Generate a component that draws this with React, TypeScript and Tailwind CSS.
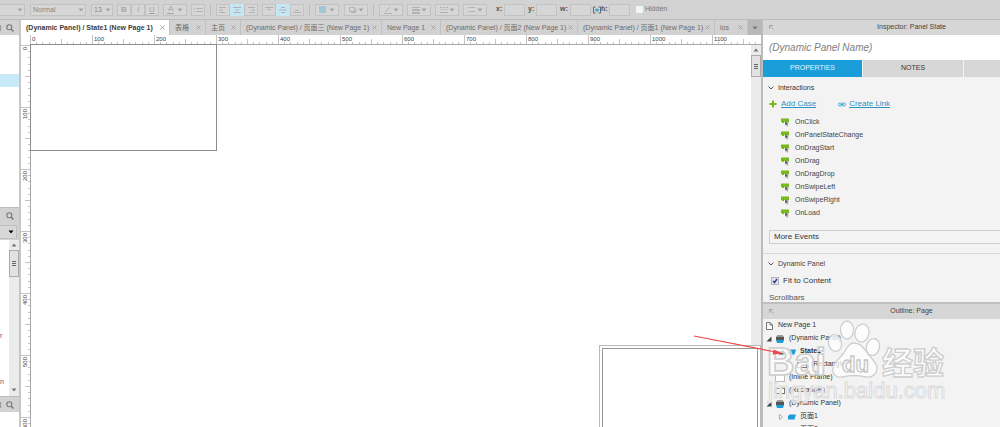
import * as React from 'react';
import clsx from 'clsx';

const SCALE = 0.62;

const tabs = [
  { label: '(Dynamic Panel) / State1 (New Page 1)', width: 'w-[149px]', active: true },
  { label: '表格', width: 'w-[36px]' },
  { label: '主页', width: 'w-[35px]' },
  { label: '(Dynamic Panel) / 页面三 (New Page 1)', width: 'w-[141px]' },
  { label: 'New Page 1', width: 'w-[59px]' },
  { label: '(Dynamic Panel) / 页面2 (New Page 1)', width: 'w-[137px]' },
  { label: '(Dynamic Panel) / 页面1 (New Page 1)', width: 'w-[137px]' },
  { label: 'ios', width: 'w-[33px]' },
];

const events = [
  'OnClick',
  'OnPanelStateChange',
  'OnDragStart',
  'OnDrag',
  'OnDragDrop',
  'OnSwipeLeft',
  'OnSwipeRight',
  'OnLoad',
];

type NodeIcon = 'page' | 'panel' | 'state' | 'rect' | 'frame';

interface TreeNode {
  label: string;
  icon: NodeIcon;
  indent: string;
  toggle?: 'open' | 'closed';
  bold?: boolean;
}

const outline: TreeNode[] = [
  { label: 'New Page 1', icon: 'page', indent: 'pl-[3px]' },
  { label: '(Dynamic Panel)', icon: 'panel', indent: 'pl-[3px]', toggle: 'open' },
  { label: 'State1', icon: 'state', indent: 'pl-[15px]', toggle: 'open', bold: true },
  { label: '(Rectangle)', icon: 'rect', indent: 'pl-[34px]' },
  { label: '(Inline Frame)', icon: 'frame', indent: 'pl-[12px]' },
  { label: '(Rectangle)', icon: 'rect', indent: 'pl-[12px]' },
  { label: '(Dynamic Panel)', icon: 'panel', indent: 'pl-[3px]', toggle: 'open' },
  { label: '页面1', icon: 'state', indent: 'pl-[15px]', toggle: 'closed' },
  { label: '页面2', icon: 'state', indent: 'pl-[15px]', toggle: 'closed' },
];

function Caret({ className = 'text-[#a2a2a2]' }: { className?: string }) {
  return (
    <svg viewBox="0 0 6 4" className={clsx('h-[4px] w-[6px] shrink-0', className)}>
      <path d="M0.5 0.5h5L3 3.5z" fill="currentColor" />
    </svg>
  );
}

function SearchIcon() {
  return (
    <svg viewBox="0 0 8 8" className="h-[8px] w-[8px]" fill="none" stroke="#777">
      <circle cx="3.3" cy="3.3" r="2.5" strokeWidth="1.1" />
      <path d="M5.2 5.2L7.5 7.5" strokeWidth="1.5" />
    </svg>
  );
}

function ToolButton({
  label,
  active,
  className = 'w-[14px]',
  menu,
  children,
}: {
  label: string;
  active?: boolean;
  className?: string;
  menu?: boolean;
  children: React.ReactNode;
}) {
  return (
    <button
      aria-label={label}
      className={clsx(
        'flex h-[12px] shrink-0 items-center border text-[8px] leading-none text-[#a6a6a6]',
        menu ? 'justify-between px-[3px]' : 'justify-center',
        active ? 'border-[#c5e6f4] bg-[#c5e6f4]' : 'border-[#c2c2c2] bg-[#d6d6d6]',
        className,
      )}
    >
      {children}
      {menu && <Caret />}
    </button>
  );
}

function Glyph({ d }: { d: string }) {
  return (
    <svg viewBox="0 0 10 8" className="h-[8px] w-[10px]" fill="none" stroke="#b2b2b2">
      <path d={d} />
    </svg>
  );
}

function ToolSelect({ label, value, className }: { label: string; value: string; className: string }) {
  return (
    <div className={clsx('grid h-[12px] shrink-0 items-center border border-[#c2c2c2] bg-[#d6d6d6]', className)}>
      <select
        aria-label={label}
        defaultValue={value}
        className="h-[10px] w-full appearance-none bg-transparent pl-[2px] text-[7px] leading-[10px] text-[#888] [grid-area:1/1]"
      >
        <option>{value}</option>
      </select>
      <div className="pointer-events-none justify-self-end pr-px [grid-area:1/1]">
        <Caret />
      </div>
    </div>
  );
}

function NumberField({ label, className = '' }: { label: string; className?: string }) {
  return (
    <label className={clsx('flex shrink-0 items-center justify-between text-[7px] font-bold text-[#555]', className)}>
      {label}:
      <input className="h-[12px] w-[21px] border border-[#c2c2c2] bg-[#d6d6d6]" />
    </label>
  );
}

function Separator() {
  return <div className="mx-[5px] h-[12px] w-px shrink-0 bg-[#bdbdbd]" />;
}

function Toolbar() {
  return (
    <div className="flex h-[20px] shrink-0 items-center overflow-hidden border-b border-[#bdbdbd] bg-[#d2d2d2]">
      <ToolSelect label="Shape style" value="" className="w-[25px] border-l-0" />
      <ToolSelect label="Font style" value="Normal" className="ml-[5px] w-[56px]" />
      <ToolSelect label="Font size" value="13" className="ml-[5px] mr-[4px] w-[22px]" />
      <ToolButton label="Bold">
        <b>B</b>
      </ToolButton>
      <ToolButton label="Italic">
        <i>I</i>
      </ToolButton>
      <ToolButton label="Underline">
        <u>U</u>
      </ToolButton>
      <ToolButton label="Text colour" menu className="ml-[4px] w-[24px]">
        <span className="border-b border-current px-px">A</span>
      </ToolButton>
      <ToolButton label="Bullets" className="ml-[4px] w-[14px]">
        <Glyph d="M1 2.5h1M3.5 2.5h6M1 5.5h1M3.5 5.5h6" />
      </ToolButton>
      <Separator />
      <ToolButton label="Align left">
        <Glyph d="M1 1.5h7M1 4h4M1 6.5h6" />
      </ToolButton>
      <ToolButton label="Align center" active>
        <Glyph d="M1 1.5h8M3 4h4M1.5 6.5h7" />
      </ToolButton>
      <ToolButton label="Align right" className="mr-[4px] w-[14px]">
        <Glyph d="M2 1.5h7M5 4h4M3 6.5h6" />
      </ToolButton>
      <ToolButton label="Align top">
        <Glyph d="M1 1.5h8M3 3.5h4" />
      </ToolButton>
      <ToolButton label="Align middle" active>
        <Glyph d="M3 1.5h4M1 4h8M3 6.5h4" />
      </ToolButton>
      <ToolButton label="Align bottom">
        <Glyph d="M3 4.5h4M1 6.5h8" />
      </ToolButton>
      <Separator />
      <ToolButton label="Fill" menu className="w-[24px]">
        <span className="h-[7px] w-[7px] bg-[#a5c6d5]" />
      </ToolButton>
      <ToolButton label="Shadow" menu className="ml-[5px] w-[24px]">
        <Glyph d="M1.5 1.5h5v4h-5z M3 6.5h5v-4" />
      </ToolButton>
      <Separator />
      <ToolButton label="Line colour" menu className="w-[24px]">
        <Glyph d="M2 6L7 1M1 7.5h8" />
      </ToolButton>
      <ToolButton label="Line width" menu className="ml-[4px] w-[24px]">
        <Glyph d="M1 1.5h8M1 3.5h8M1 4.5h8M1 6.5h8M1 7.5h8" />
      </ToolButton>
      <ToolButton label="Line style" menu className="ml-[4px] w-[24px]">
        <Glyph d="M1 1.5h2M4 1.5h2M7 1.5h2M1 3.5h1M3 3.5h1M5 3.5h1M7 3.5h1M1 6.5h8" />
      </ToolButton>
      <ToolButton label="Arrow style" menu className="ml-[4px] w-[24px]">
        <Glyph d="M3 1.5h5M1 1.5h1M3 5.5h5M1 5.5h1" />
      </ToolButton>
      <NumberField label="x" className="ml-[9px] w-[29px]" />
      <NumberField label="y" className="ml-[3px] w-[29px]" />
      <NumberField label="w" className="ml-[3px] w-[31px]" />
      <svg viewBox="0 0 8 8" className="ml-[2px] h-[8px] w-[8px] shrink-0" fill="none">
        <path d="M2.5 1H.5v6h2M5.5 1h2v6h-2" stroke="#666" />
        <path d="M2 4h4M4 2.5v3" stroke="#36a3d3" strokeWidth="1.5" />
      </svg>
      <NumberField label="h" className="w-[29px]" />
      <label className="ml-[6px] flex shrink-0 items-center gap-[2px] text-[7px] text-[#777]">
        <input type="checkbox" className="h-[7px] w-[7px] appearance-none bg-[#f4f4f4]" />
        Hidden
      </label>
    </div>
  );
}

function TabBar() {
  return (
    <div className="flex h-[15px] shrink-0 bg-[#d2d2d2]">
      {tabs.map((tab) => (
        <div
          key={tab.label}
          className={clsx(
            'flex shrink-0 items-center justify-between whitespace-nowrap border-r border-[#c2c2c2] pl-[5px] pr-[4px]',
            tab.width,
            tab.active ? 'bg-white font-bold text-[#3c3c3c]' : 'text-[#6c6c6c]',
          )}
        >
          <button className="text-[7px] leading-[15px]">{tab.label}</button>
          <button aria-label="Close tab">
            <svg viewBox="0 0 5 5" className="h-[5px] w-[5px]" stroke="#a4a4a4">
              <path d="M.5.5l4 4M4.5.5l-4 4" />
            </svg>
          </button>
        </div>
      ))}
      <button aria-label="All tabs" className="flex flex-1 items-center justify-center bg-[#b8b8b8]">
        <Caret className="text-[#777]" />
      </button>
    </div>
  );
}

function Ruler({ length, vertical }: { length: number; vertical?: boolean }) {
  const ticks = Array.from({ length: length / 10 }, (_, i) => i);
  return (
    <svg
      className={clsx(
        'block shrink-0 border-[#a9a9a9] bg-white',
        vertical ? 'h-full w-[10px] border-r' : 'h-[10px] w-full border-b',
      )}
    >
      {ticks.map((i) => {
        const p = Math.round(i * 10 * SCALE) + 0.5;
        const start = i % 10 === 0 ? 0 : i % 5 === 0 ? 4 : 7;
        return (
          <line
            key={i}
            x1={vertical ? start : p}
            x2={vertical ? 10 : p}
            y1={vertical ? p : start}
            y2={vertical ? p : 10}
            stroke="#c4c4c4"
          />
        );
      })}
      {ticks
        .filter((i) => i % 10 === 0)
        .map((i) => {
          const p = Math.round(i * 10 * SCALE) + 2;
          return vertical ? (
            <text key={i} transform={`translate(6 ${p}) rotate(-90)`} textAnchor="end" fontSize="6" fill="#444">
              {i * 10}
            </text>
          ) : (
            <text key={i} x={p} y="6" fontSize="6" fill="#444">
              {i * 10}
            </text>
          );
        })}
    </svg>
  );
}

function ScrollBar({ thumb, downArrow }: { thumb: string; downArrow?: boolean }) {
  return (
    <div className="flex w-[10px] shrink-0 flex-col items-center bg-[#ebebeb]">
      <div className="flex h-[10px] items-center">
        <Caret className="rotate-180 text-[#777]" />
      </div>
      <div
        className={clsx(
          'flex w-[10px] flex-col items-center justify-center gap-px border border-[#aaa] bg-[#e2e2e2]',
          thumb,
        )}
      >
        <span className="h-px w-[4px] bg-[#666]" />
        <span className="h-px w-[4px] bg-[#666]" />
        <span className="h-px w-[4px] bg-[#666]" />
      </div>
      {downArrow && (
        <div className="mt-auto flex h-[12px] items-center">
          <Caret className="text-[#777]" />
        </div>
      )}
    </div>
  );
}

function LeftHeader({ clipped }: { clipped?: boolean }) {
  return (
    <div className="flex h-[16px] shrink-0 items-center justify-between border-t border-[#bdbdbd] bg-[#d2d2d2] pr-[5px]">
      <span className={clsx('h-[6px] w-px', clipped && 'bg-[#999]')} />
      <button aria-label="Search">
        <SearchIcon />
      </button>
    </div>
  );
}

function LeftPanels() {
  return (
    <aside className="flex w-[21px] shrink-0 flex-col border-r-2 border-[#c6c6c6] bg-white">
      <div className="-mt-px">
        <LeftHeader clipped />
      </div>
      <div className="h-[172px] shrink-0 pt-[39px]">
        <div className="h-[13px] bg-[#c8e9f7]" />
      </div>
      <LeftHeader />
      <div className="flex h-[17px] shrink-0 items-center bg-[#d2d2d2] pr-[2px]">
        <button
          aria-label="Library"
          className="flex h-[14px] flex-1 items-center justify-end border border-l-0 border-[#bebebe] bg-[#d8d8d8] pr-[2px]"
        >
          <Caret className="text-black" />
        </button>
      </div>
      <div className="flex h-[156px] shrink-0 justify-between">
        <div className="flex flex-col pt-[90px] text-[7px] leading-[12px] text-[#664e66]">
          <span>r</span>
          <span className="mt-[34px]">n</span>
        </div>
        <ScrollBar thumb="h-[27px]" downArrow />
      </div>
      <LeftHeader clipped />
    </aside>
  );
}

function Canvas() {
  return (
    <div className="relative flex min-h-0 flex-1">
      <Ruler vertical length={620} />
      <div className="relative min-w-0 flex-1 bg-white">
        <div className="absolute -left-px -top-px h-[107px] w-[187px] border border-[#8c8c8c]" />
      </div>
      <ScrollBar thumb="h-[22px]" />
      {/* dragged panel sits above the scroll bar */}
      <div className="absolute -bottom-1 right-0 top-[300px] w-[162px] border border-[#b9b9b9] bg-white p-[2px]">
        <div className="h-full border border-[#999]" />
      </div>
    </div>
  );
}

function PanelHeader({ title }: { title: string }) {
  return (
    <div className="grid h-[15px] shrink-0 grid-cols-[1fr_auto_1fr] items-center bg-[#d6d6d6] px-[6px] text-[7px] text-[#444]">
      <svg viewBox="0 0 5 5" className="h-[5px] w-[5px]" fill="none" stroke="#aaa">
        <path d="M.5 4V.5H4M.5.5l4 4" />
      </svg>
      <h2 className="pl-[60px]">{title}</h2>
    </div>
  );
}

function Chevron() {
  return (
    <svg viewBox="0 0 6 4" className="h-[4px] w-[6px]" fill="none" stroke="#555">
      <path d="M.5.5L3 3L5.5.5" />
    </svg>
  );
}

function EventIcon() {
  return (
    <svg viewBox="0 0 8 9" className="h-[9px] w-[8px]">
      <path d="M0 .5h8v4H6V4H3v1H1V4H0z" fill="#76b917" />
      <path d="M4 2.5v5l1.2-.9.8 1.9 1-.4-.8-1.8h1.5z" fill="#555" stroke="#f3f3f3" strokeWidth=".3" />
    </svg>
  );
}

function Inspector() {
  return (
    <section className="flex h-[282px] shrink-0 flex-col overflow-hidden bg-[#f3f3f3]">
      <PanelHeader title="Inspector: Panel State" />
      <input
        aria-label="Panel name"
        placeholder="(Dynamic Panel Name)"
        className="h-[25px] shrink-0 bg-white px-[6px] text-[10px] italic placeholder:text-[#808080]"
      />
      <div className="flex h-[17px] shrink-0 gap-px bg-[#f3f3f3] text-[7px]">
        <button className="w-[99px] bg-[#1b9dd9] text-[#e4f5fd]">PROPERTIES</button>
        <button className="w-[100px] bg-[#d7d7d7] text-[#333]">NOTES</button>
        <div className="flex-1 bg-[#d7d7d7]" />
      </div>
      <button className="flex h-[22px] shrink-0 items-center gap-[4px] px-[5px] text-[7px] text-[#333]">
        <Chevron />
        Interactions
      </button>
      <div className="flex h-[10px] shrink-0 items-center px-[6px] text-[8px] leading-[10px] text-[#2b94c3]">
        <svg viewBox="0 0 8 8" className="mr-[4px] h-[8px] w-[8px]" stroke="#76b917" strokeWidth="2">
          <path d="M4 .5v7M.5 4h7" />
        </svg>
        <a href="#add-case" className="underline">
          Add Case
        </a>
        <svg viewBox="0 0 8 5" className="ml-[22px] mr-[3px] h-[5px] w-[8px]" fill="none" stroke="#3fa6d6">
          <rect x=".5" y="1" width="3.5" height="3" rx="1.5" />
          <rect x="4" y="1" width="3.5" height="3" rx="1.5" />
          <path d="M2.5 2.5h3" />
        </svg>
        <a href="#create-link" className="underline">
          Create Link
        </a>
      </div>
      <ul className="shrink-0 pt-[7px]">
        {events.map((name) => (
          <li key={name} className="flex h-[13px] items-center gap-[6px] pl-[18px] text-[7px] text-[#444]">
            <EventIcon />
            {name}
          </li>
        ))}
      </ul>
      <div className="flex shrink-0 border-b border-[#d8d8d8] pb-[9px] pl-[6px] pt-[10px]">
        <button className="h-[14px] flex-1 border border-r-0 border-[#cfcfcf] pl-[4px] text-left text-[8px] leading-[12px] text-[#333]">
          More Events
        </button>
      </div>
      <button className="flex h-[20px] shrink-0 items-center gap-[4px] px-[5px] text-[7px] text-[#444]">
        <Chevron />
        Dynamic Panel
      </button>
      <label className="flex h-[14px] shrink-0 items-center gap-[4px] px-[8px] text-[8px] text-[#333]">
        <span className="grid">
          <input
            type="checkbox"
            defaultChecked
            className="peer h-[8px] w-[8px] appearance-none border border-[#b4b4b4] bg-[#e3e5ee] [grid-area:1/1]"
          />
          <svg
            viewBox="0 0 8 8"
            className="pointer-events-none invisible h-[8px] w-[8px] [grid-area:1/1] peer-checked:visible"
            fill="none"
            stroke="#343a8e"
            strokeWidth="1.5"
          >
            <path d="M2 4l1.5 1.500L6 2" />
          </svg>
        </span>
        Fit to Content
      </label>
      <h3 className="mt-[4px] shrink-0 px-[6px] text-[8px] leading-[12px] text-[#555]">Scrollbars</h3>
    </section>
  );
}

function TreeIcon({ icon }: { icon: NodeIcon }) {
  switch (icon) {
    case 'page':
      return (
        <svg viewBox="0 0 7 8" className="mr-[5px] h-[8px] w-[7px]" fill="#fff" stroke="#777">
          <path d="M.5.5h3.5L6.5 3v4.5h-6z M4 .5V3h2.5" />
        </svg>
      );
    case 'panel':
      return (
        <svg viewBox="0 0 8 8" className="mr-[5px] h-[8px] w-[8px]">
          <path d="M1.5 0h5L8 2H0z" fill="#999" />
          <path d="M0 2h8v3H0z" fill="#555" />
          <path d="M0 5h8L7 8H1z" fill="#1b9dd9" />
        </svg>
      );
    case 'state':
      return (
        <svg viewBox="0 0 8 6" className="mr-[4px] h-[6px] w-[8px]">
          <path d="M1.5.5H8L6.5 5.5H0V2z" fill="#1b9dd9" />
        </svg>
      );
    case 'rect':
      return <span className="mr-[4px] h-[6px] w-[10px] border border-[#777] bg-white" />;
    case 'frame':
      return <span className="mr-[4px] h-[8px] w-[10px] border border-[#bbb] bg-white" />;
  }
}

function Outline() {
  return (
    <section className="flex min-h-0 flex-1 flex-col overflow-hidden border-t-2 border-[#c0c0c0] bg-[#f3f3f3]">
      <PanelHeader title="Outline: Page" />
      <ul>
        {outline.map((node, i) => (
          <li
            key={i}
            className={clsx(
              'flex h-[13px] items-center text-[7px] text-[#333]',
              node.indent,
              node.bold && 'font-bold',
            )}
          >
            {node.toggle && (
              <button aria-label="Toggle" className="mr-[4px]">
                <svg viewBox="0 0 6 6" className="h-[6px] w-[6px]">
                  {node.toggle === 'open' ? (
                    <path d="M5.5.5v5h-5z" fill="#444" />
                  ) : (
                    <path d="M1.5.5L4.5 3l-3 2.5z" fill="#fff" stroke="#999" strokeWidth=".8" />
                  )}
                </svg>
              </button>
            )}
            <TreeIcon icon={node.icon} />
            {node.label}
          </li>
        ))}
      </ul>
    </section>
  );
}

function Watermark() {
  return (
    <svg
      viewBox="0 0 180 90"
      className="pointer-events-none absolute right-[54px] top-[318px] h-[90px] w-[180px]"
      fill="#fff"
      fillOpacity=".75"
      stroke="#cecece"
      strokeWidth="1.3"
      fontWeight="bold"
    >
      <text x="1" y="57" fontSize="38" strokeWidth="1.6">
        Bai
      </text>
      <ellipse cx="81" cy="12" rx="6.5" ry="9" />
      <ellipse cx="96" cy="15" rx="7" ry="9" transform="rotate(12 96 15)" />
      <ellipse cx="69" cy="25" rx="6.5" ry="8.5" transform="rotate(-12 69 25)" />
      <ellipse cx="107" cy="29" rx="6.5" ry="8.5" transform="rotate(14 107 29)" />
      <path d="M88 25c7 0 10 6 14 11s9 9 9 14c0 6-5 10-11 9-8-2-16-2-24 0-6 1-10-3-9-9 1-6 6-9 10-14s5-11 11-11z" />
      <text x="76" y="54" fontSize="22" stroke="#c6c6c6">
        du
      </text>
      <text x="116" y="56" fontSize="31" fontFamily="Liberation Sans, Noto Sans CJK SC, sans-serif">
        经验
      </text>
      <text x="2" y="80" fontSize="22" fontWeight="normal" stroke="#dadada" strokeWidth="1">
        jingyan.baidu.com
      </text>
    </svg>
  );
}

export default function App() {
  return (
    <div className="relative flex h-screen flex-col overflow-hidden bg-white font-['Liberation_Sans','Noto_Sans_CJK_SC',sans-serif]">
      <Toolbar />
      <div className="flex min-h-0 flex-1">
        <LeftPanels />
        <main className="flex min-w-0 flex-1 flex-col">
          <TabBar />
          <div className="shrink-0 pl-[9px]">
            <Ruler length={1180} />
          </div>
          <Canvas />
        </main>
        <aside className="z-10 flex w-[239px] shrink-0 flex-col border-l-2 border-[#bcbcbc]">
          <Inspector />
          <Outline />
        </aside>
      </div>
      <div className="pointer-events-none absolute inset-0 z-20">
        <Watermark />
        {/* annotation arrow */}
        <svg viewBox="0 0 92 22" className="absolute right-[215px] top-[334px] h-[22px] w-[92px]">
          <path d="M1 2L80 17.5" stroke="#f04848" strokeWidth="1.2" />
          <path d="M80.500 15.500L90 19.500L79.500 20.500z" fill="#f04848" />
        </svg>
      </div>
    </div>
  );
}
